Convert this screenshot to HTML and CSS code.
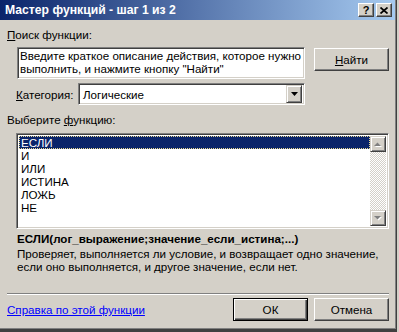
FILE: index.html
```html
<html>
	<head>
		<meta charset="UTF-8">
		<title>Мастер функций - шаг 1 из 2</title>
		<link rel="stylesheet" href="styles.css">
	</head>
	<body>
		<div class="window">

			<div class="titlebar">
				<span class="title">Мастер функций - шаг 1 из 2</span>
				<div class="caption-btns">
					<span class="cbtn">?</span>
					<span class="cbtn">
						<svg width="8" height="7" viewBox="0 0 8 7"><path d="M0.5 0.5L7.5 6.5M7.5 0.5L0.5 6.5" stroke="#000" stroke-width="1.7"/></svg>
					</span>
				</div>
			</div>

			<div class="dialog-body">

				<div class="label search-label"><u>П</u>оиск функции:</div>

				<div class="search-row">
					<div class="field search-field">
						Введите краткое описание действия, которое нужно<br>
						выполнить, и нажмите кнопку "Найти"
					</div>
					<span class="btn find-btn"><u>Н</u>айти</span>
				</div>

				<div class="category-row">
					<span class="label"><u>К</u>атегория:</span>
					<div class="field select">
						<span class="select-text">Логические</span>
						<span class="drop-btn">
							<svg width="7" height="4" viewBox="0 0 7 4"><path d="M0 0H7L3.5 4Z" fill="#000"/></svg>
						</span>
					</div>
				</div>

				<div class="label list-label">Выберите <u>ф</u>ункцию:</div>

				<div class="field listbox">
					<ul class="items">
						<li class="selected">ЕСЛИ</li>
						<li>И</li>
						<li>ИЛИ</li>
						<li>ИСТИНА</li>
						<li>ЛОЖЬ</li>
						<li>НЕ</li>
					</ul>
					<div class="vscroll">
						<span class="sbtn">
							<svg width="8" height="5" viewBox="0 0 8 5"><path d="M1 5H8L4.5 1.5Z" fill="#fff"/><path d="M0 4H7L3.5 0.5Z" fill="#808080"/></svg>
						</span>
						<span class="track"></span>
						<span class="sbtn">
							<svg width="8" height="5" viewBox="0 0 8 5"><path d="M1 1H8L4.5 4.5Z" fill="#fff"/><path d="M0 0H7L3.5 3.5Z" fill="#808080"/></svg>
						</span>
					</div>
				</div>

				<div class="signature">ЕСЛИ(лог_выражение;значение_если_истина;...)</div>

				<div class="description">
					Проверяет, выполняется ли условие, и возвращает одно значение,<br>
					если оно выполняется, и другое значение, если нет.
				</div>

				<div class="separator"></div>

				<div class="footer">
					<a href="" class="help-link">Справка по этой функции</a>
					<div class="actions">
						<span class="btn default">ОК</span>
						<span class="btn">Отмена</span>
					</div>
				</div>

			</div>
		</div>
	</body>
</html>
```

FILE: styles.css
```css
body
{
	margin: 0;
	background: #d4d0c8;
	font-size: 11.6px;
	font-family: "Liberation Sans", Arial, sans-serif;
	color: #000;
}

.window
{
	width: 395px;
	height: 329px;
	padding-right: 1px;
	background: #d4d0c8;
	border-right: 1px solid #404040;
	border-bottom: 3px solid #404040;
	box-shadow: inset -1px -1px #808080;
}

/* caption */

.titlebar
{
	display: flex;
	align-items: center;
	justify-content: space-between;
	height: 20px;
	padding: 0 3px 0 5px;
	background: linear-gradient(to right, #0a246a, #a6caf0);
}

.title
{
	color: #fff;
	font-weight: bold;
	font-size: 12.2px;
}

.caption-btns
{
	display: flex;
	gap: 2px;
}

.cbtn
{
	display: flex;
	align-items: center;
	justify-content: center;
	box-sizing: border-box;
	width: 16px;
	height: 14px;
	font-weight: bold;
	font-size: 11px;
	background: #d4d0c8;
	border: 1px solid;
	border-color: #fff #404040 #404040 #fff;
	box-shadow: inset -1px -1px #808080;
}

/* common controls */

.label
{
	line-height: 13px;
}

.field
{
	box-sizing: border-box;
	background: #fff;
	border: 1px solid;
	border-color: #808080 #fff #fff #808080;
	box-shadow: inset 1px 1px #404040, inset -1px -1px #d4d0c8;
}

.btn
{
	box-sizing: border-box;
	width: 75px;
	height: 23px;
	line-height: 21px;
	text-align: center;
	background: #d4d0c8;
	border: 1px solid;
	border-color: #fff #404040 #404040 #fff;
	box-shadow: inset -1px -1px #808080;
}

.btn.default
{
	border-color: #000;
	box-shadow: inset 1px 1px #fff, inset -1px -1px #404040, inset -2px -2px #808080;
}

/* body */

.dialog-body
{
	padding: 8px 6px 0 7px;
}

.search-label
{
	margin-bottom: 6px;
}

.search-row
{
	display: flex;
	align-items: flex-start;
	margin-left: 10px;
}

.search-field
{
	width: 288px;
	height: 32px;
	padding: 1px 2px;
	line-height: 13px;
	white-space: nowrap;
	overflow: hidden;
}

.find-btn
{
	margin-left: 9px;
	margin-top: 1px;
}

.category-row
{
	display: flex;
	align-items: center;
	justify-content: space-between;
	width: 289px;
	margin: 4px 0 0 9px;
}

.select
{
	display: flex;
	align-items: center;
	width: 227px;
	height: 22px;
	padding: 2px;
}

.select-text
{
	flex: 1;
	padding-left: 2px;
}

.drop-btn
{
	display: flex;
	align-items: center;
	justify-content: center;
	box-sizing: border-box;
	width: 16px;
	height: 18px;
	background: #d4d0c8;
	border: 1px solid;
	border-color: #d4d0c8 #404040 #404040 #d4d0c8;
	box-shadow: inset 1px 1px #fff, inset -1px -1px #808080;
}

.list-label
{
	margin: 8px 0 7px;
}

.listbox
{
	display: flex;
	width: 373px;
	height: 96px;
	margin-left: 9px;
	padding: 2px;
}

.items
{
	flex: 1;
	margin: 0;
	padding: 0;
	list-style: none;
}

.items li
{
	height: 13px;
	line-height: 13px;
	padding-left: 2px;
}

.items li.selected
{
	background: #0a246a;
	color: #fff;
	outline: 1px dotted #e8d890;
	outline-offset: -1px;
}

.vscroll
{
	display: flex;
	flex-direction: column;
	width: 16px;
}

.sbtn
{
	display: flex;
	align-items: center;
	justify-content: center;
	box-sizing: border-box;
	height: 16px;
	background: #d4d0c8;
	border: 1px solid;
	border-color: #d4d0c8 #404040 #404040 #d4d0c8;
	box-shadow: inset 1px 1px #fff, inset -1px -1px #808080;
}

.track
{
	flex: 1;
	background: repeating-conic-gradient(#d4d0c8 0 25%, #fff 0 50%) 0 0 / 2px 2px;
}

.signature
{
	margin: 3px 0 0 10px;
	line-height: 13px;
	font-weight: bold;
}

.description
{
	margin: 2px 0 0 10px;
	line-height: 13px;
	white-space: nowrap;
}

.separator
{
	margin-top: 20px;
	height: 0;
	border-top: 1px solid #808080;
	border-bottom: 1px solid #fff;
}

.footer
{
	display: flex;
	align-items: center;
	margin-top: 3px;
}

.help-link
{
	color: #0000ff;
}

.actions
{
	display: flex;
	gap: 6px;
	margin-left: auto;
}
```
